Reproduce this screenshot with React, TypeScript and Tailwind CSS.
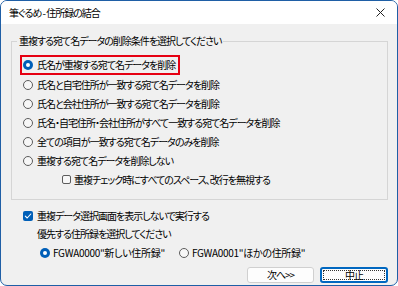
function Radio({ checked }: { checked?: boolean }) {
  if (checked) {
    return (
      <span className="flex h-[10px] w-[10px] shrink-0 items-center justify-center rounded-full bg-[#005fb8]">
        <span className="h-[4px] w-[4px] rounded-full bg-white" />
      </span>
    );
  }
  return <span className="h-[10px] w-[10px] shrink-0 rounded-full border border-[#5c5c5c] bg-[#f7f7f7]" />;
}

function Checkbox({ checked }: { checked?: boolean }) {
  if (checked) {
    return (
      <span className="flex h-[10px] w-[10px] shrink-0 items-center justify-center rounded-[2px] bg-[#005fb8]">
        <svg width="8" height="8" viewBox="0 0 8 8" fill="none">
          <path d="M1.3 4.2 L3.2 6 L6.8 2" stroke="white" strokeWidth="1.1" strokeLinecap="round" strokeLinejoin="round" />
        </svg>
      </span>
    );
  }
  return <span className="h-[9px] w-[9px] shrink-0 rounded-[2px] border border-[#5c5c5c] bg-[#f7f7f7]" />;
}

const options = [
  '氏名と自宅住所が一致する宛て名データを削除',
  '氏名と会社住所が一致する宛て名データを削除',
  '氏名・自宅住所・会社住所がすべて一致する宛て名データを削除',
  '全ての項目が一致する宛て名データのみを削除',
  '重複する宛て名データを削除しない',
];

export default function App() {
  return (
    <div className="flex h-[286px] w-[398px] flex-col overflow-hidden rounded-[7px] border border-[#1f5fa6] bg-[#f0f0f0] font-['Noto_Sans_CJK_JP','Noto_Sans',sans-serif] text-[10px] leading-[14px] tracking-[-1px] text-black [font-feature-settings:'palt']">
      {/* title bar */}
      <div className="flex h-[23px] shrink-0 items-center justify-between bg-white pl-[8px] pr-[12px]">
        <span>筆ぐるめ&nbsp;-&nbsp;住所録の結合</span>
        <svg width="9" height="9" viewBox="0 0 9 9">
          <path d="M0.5 0.5 L8.5 8.5 M8.5 0.5 L0.5 8.5" stroke="#222" strokeWidth="1" />
        </svg>
      </div>

      <div className="flex flex-1 flex-col pl-[10px] pr-[9px] pt-[10px]">
        <fieldset className="border border-[#d5d5d5] pb-[10px]">
          <legend className="ml-[5px] px-[2px]">重複する宛て名データの削除条件を選択してください</legend>
          <div className="flex flex-col pt-[7px]">
            <div className="ml-[8px] flex h-[20px] w-fit items-center gap-[4px] border-2 border-[#e60012] pl-[1px] pr-[3px]">
              <Radio checked />
              <span>氏名が重複する宛て名データを削除</span>
            </div>
            {options.map((o) => (
              <div key={o} className="flex h-[19px] items-center gap-[4px] pl-[11px]">
                <Radio />
                <span>{o}</span>
              </div>
            ))}
            <div className="flex h-[19px] items-center gap-[3px] pl-[50px]">
              <Checkbox />
              <span>重複チェック時にすべてのスペース、改行を無視する</span>
            </div>
          </div>
        </fieldset>

        <div className="mt-[6px] flex h-[19px] items-center gap-[4px] pl-[12px]">
          <Checkbox checked />
          <span>重複データ選択画面を表示しないで実行する</span>
        </div>
        <div className="flex h-[17px] items-center pl-[26px]">優先する住所録を選択してください</div>
        <div className="mt-[2px] flex h-[17px] items-center pl-[29px] tracking-[-0.3px]">
          <div className="flex items-center gap-[3px]">
            <Radio checked />
            <span>FGWA0000"新しい住所録"</span>
          </div>
          <div className="ml-[14px] flex items-center gap-[3px]">
            <Radio />
            <span>FGWA0001"ほかの住所録"</span>
          </div>
        </div>

        <div className="mt-[6px] flex justify-end gap-[6px]">
          <button className="flex h-[16px] w-[67px] items-center justify-center rounded-[3px] border border-[#d0d0d0] bg-[#fdfdfd] leading-[14px]">
            次へ&gt;&gt;
          </button>
          <button className="h-[16px] w-[68px] rounded-[3px] border-2 border-[#0067c0] bg-[#fdfdfd] p-[1px]">
            <span className="flex h-full w-full items-center justify-center border border-dotted border-[#333] leading-[10px]">
              中止
            </span>
          </button>
        </div>
      </div>
    </div>
  );
}
